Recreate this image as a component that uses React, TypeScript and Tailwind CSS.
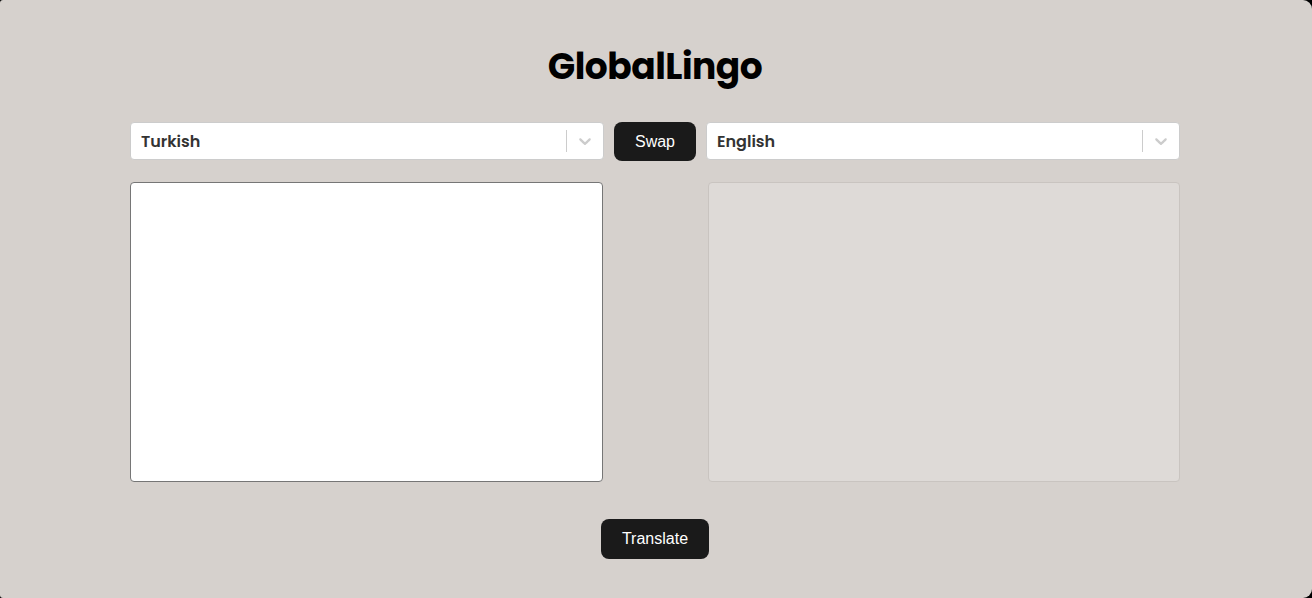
import { useState } from "react";

const languages = ["Turkish", "English"];

function Chevron() {
  return (
    <svg viewBox="0 0 20 20" className="h-5 w-5 fill-[#cccccc]" aria-hidden="true">
      <path d="M4.516 7.548c0.436-0.446 1.043-0.481 1.576 0l3.908 3.747 3.908-3.747c0.533-0.481 1.141-0.446 1.574 0 0.436 0.445 0.408 1.197 0 1.615-0.406 0.418-4.695 4.502-4.695 4.502-0.217 0.223-0.502 0.335-0.787 0.335s-0.57-0.112-0.789-0.335c0 0-4.287-4.084-4.695-4.502s-0.436-1.17 0-1.615z" />
    </svg>
  );
}

function LanguageSelect({ value }: { value: string }) {
  return (
    <div className="flex h-[38px] items-center rounded-[4px] border border-[#cccccc] bg-white">
      <div className="flex-1 pl-[10px] pt-px font-['Poppins','Inter',sans-serif] text-[16px] font-semibold text-[#333333]">
        {value}
      </div>
      <span className="my-2 h-[22px] w-px bg-[#cccccc]" />
      <div className="flex w-9 justify-center">
        <Chevron />
      </div>
    </div>
  );
}

function App() {
  const [from, setFrom] = useState(languages[0]);
  const [to, setTo] = useState(languages[1]);
  const [text, setText] = useState("");

  function swap() {
    setFrom(to);
    setTo(from);
  }

  return (
    <div className="h-[598px] w-full bg-black">
      <div className="h-full rounded-l-[3px] rounded-r-[9px] bg-[#d6d1cd] pl-[130px] pr-[132px] pt-[45px]">
        <h1 className="text-center font-['Poppins','Inter',sans-serif] text-[36px] font-bold leading-[44px] tracking-[-0.5px] text-black">
          GlobalLingo
        </h1>

        <div className="mt-[33px] grid grid-cols-[1fr_auto_1fr] items-start gap-[10px]">
          <LanguageSelect value={from} />
          <button
            onClick={swap}
            className="h-[39px] rounded-[8px] bg-[#1a1a1a] px-[21px] font-['Liberation_Sans',Arial,sans-serif] text-[16px] text-white"
          >
            Swap
          </button>
          <LanguageSelect value={to} />
        </div>

        <div className="mt-[21px] grid grid-cols-2 gap-[105px]">
          <textarea
            value={text}
            onChange={(e) => setText(e.target.value)}
            className="h-[300px] w-full resize-none rounded-[4px] border border-[#767676] bg-white p-2 outline-none"
          />
          <textarea
            readOnly
            className="h-[300px] w-full resize-none rounded-[4px] border border-[#c9c4c0] bg-[#dedad7] p-2 outline-none"
          />
        </div>

        <div className="mt-[37px] flex justify-center">
          <button className="h-10 rounded-[8px] bg-[#1a1a1a] px-[21px] font-['Liberation_Sans',Arial,sans-serif] text-[16px] text-white">
            Translate
          </button>
        </div>
      </div>
    </div>
  );
}

export default App;
